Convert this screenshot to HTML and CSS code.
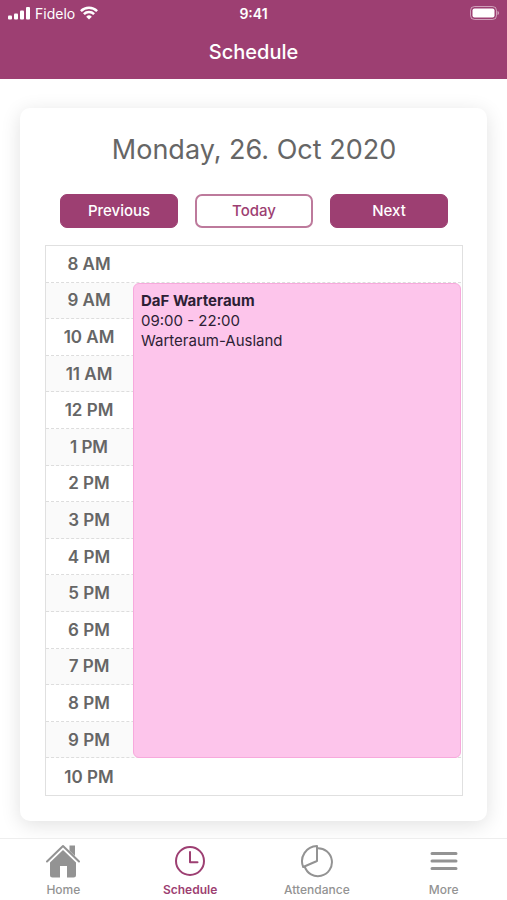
FILE: index.html
```html
<!DOCTYPE html>
<html lang="en">
<head>
<meta charset="utf-8">
<meta name="viewport" content="width=device-width, initial-scale=1">
<title>Schedule</title>
<link rel="stylesheet" href="styles.css">
</head>
<body>
<header class="header">
  <div class="status">
    <div class="carrier">
      <svg width="22" height="14" viewBox="0 0 22 14" fill="currentColor" aria-hidden="true">
        <rect x="0" y="9.500" width="4" height="4" rx="1"/><rect x="6" y="7.500" width="4" height="6" rx="1"/><rect x="12" y="4.500" width="4" height="9" rx="1"/><rect x="18" y="1" width="4" height="12.500" rx="1"/>
      </svg>
      <span>Fidelo</span>
      <svg width="18" height="14" viewBox="0 0 18 14" fill="none" stroke="currentColor" stroke-width="2.5" aria-hidden="true">
        <path d="M.9 5.1a11.6 11.6 0 0 1 16.2 0M3.9 8.2a7.3 7.3 0 0 1 10.2 0"/><path d="M6.2 10.7a4 4 0 0 1 5.6 0L9 13.6z" fill="currentColor" stroke="none"/>
      </svg>
    </div>
    <time class="clock">9:41</time>
    <svg class="battery" width="30" height="14" viewBox="0 0 30 14" aria-hidden="true">
      <rect x="1.500" y=".5" width="26" height="13" rx="4" fill="none" stroke="#fff" stroke-opacity=".5"/><rect x="3.500" y="2.500" width="22" height="9" rx="2" fill="#fff"/><path d="M28.500 5c2 .6 2 3.400 0 4z" fill="#fff" fill-opacity=".5"/>
    </svg>
  </div>
  <h1 class="title">Schedule</h1>
</header>
<main class="main">
  <section class="card">
    <h2 class="date">Monday, 26. Oct 2020</h2>
    <div class="actions">
      <button class="button" type="button">Previous</button>
      <button class="button outline" type="button">Today</button>
      <button class="button" type="button">Next</button>
    </div>
    <div class="calendar">
      <ol class="hours">
        <li><span>8 AM</span></li>
        <li><span>9 AM</span></li>
        <li><span>10 AM</span></li>
        <li><span>11 AM</span></li>
        <li><span>12 PM</span></li>
        <li><span>1 PM</span></li>
        <li><span>2 PM</span></li>
        <li><span>3 PM</span></li>
        <li><span>4 PM</span></li>
        <li><span>5 PM</span></li>
        <li><span>6 PM</span></li>
        <li><span>7 PM</span></li>
        <li><span>8 PM</span></li>
        <li><span>9 PM</span></li>
        <li><span>10 PM</span></li>
      </ol>
      <article class="event">
        <h3>DaF Warteraum</h3>
        <p>09:00 - 22:00</p>
        <p>Warteraum-Ausland</p>
      </article>
    </div>
  </section>
</main>
<nav class="tabs">
  <a href="#home">
    <svg width="36" height="34" viewBox="0 0 36 34" fill="currentColor" aria-hidden="true">
      <path d="M2 17.500 18 2l16 15.500" fill="none" stroke="currentColor" stroke-width="2" stroke-linecap="round" stroke-linejoin="round"/><path d="M24.500 1.500H30v10.500L24.500 6.700z"/><path d="M18 6 31 18.600V31a2.500 2.500 0 0 1-2.500 2.500H22V22h-7v11.500H7.500A2.500 2.500 0 0 1 5 31V18.600z"/>
    </svg>
    <span>Home</span>
  </a>
  <a class="active" href="#schedule" aria-current="page">
    <svg width="36" height="34" viewBox="0 0 36 34" fill="none" stroke="currentColor" stroke-width="2" aria-hidden="true">
      <circle cx="18" cy="17" r="14"/><path d="M18 8v10.200h7.500" stroke-linecap="round" stroke-linejoin="round"/>
    </svg>
    <span>Schedule</span>
  </a>
  <a href="#attendance">
    <svg width="36" height="34" viewBox="0 0 36 34" fill="none" stroke="currentColor" stroke-width="2" stroke-linejoin="round" aria-hidden="true">
      <path d="M18 2A15.200 15.200 0 0 0 4.200 23L18 17zM18 4.200a14 14 0 1 1-12.400 18.200"/>
    </svg>
    <span>Attendance</span>
  </a>
  <a href="#more">
    <svg width="36" height="34" viewBox="0 0 36 34" fill="none" stroke="currentColor" stroke-width="3" stroke-linecap="round" aria-hidden="true">
      <path d="M6 9.500h24M6 17h24M6 24.500h24"/>
    </svg>
    <span>More</span>
  </a>
</nav>
</body>
</html>
```
FILE: styles.css
```css
:root {
  --brand: #9d3f72;
}

* {
  box-sizing: border-box;
  margin: 0;
  padding: 0;
}

body {
  display: flex;
  flex-direction: column;
  min-height: 100vh;
  background: #fff;
  color: #666;
  font-family: Inter, "Liberation Sans", sans-serif;
  font-size: 16px;
}

.header {
  padding: 3px 8px 13px;
  background: var(--brand);
  color: #fff;
}

.status {
  display: grid;
  grid-template-columns: 1fr auto 1fr;
  align-items: center;
  height: 20px;
  font-size: 14px;
}

.carrier {
  display: flex;
  align-items: center;
  gap: 5px;
}

.clock {
  font-weight: 600;
}

.battery {
  justify-self: end;
}

.title {
  margin-top: 15px;
  font-size: 20px;
  font-weight: 500;
  line-height: 28px;
  text-align: center;
}

.main {
  display: flex;
  flex: 1;
  padding: 29px 20px 17px;
}

.card {
  display: flex;
  flex: 1;
  flex-direction: column;
  padding: 24px 24px 25px 25px;
  border-radius: 10px;
  box-shadow: 0 4px 20px rgba(0, 0, 0, 0.12);
}

.date {
  font-size: 27px;
  font-weight: 400;
  line-height: 36px;
  text-align: center;
}

.actions {
  display: grid;
  grid-template-columns: repeat(3, 1fr);
  gap: 17px;
  margin: 26px 15px 17px;
}

.button {
  height: 34px;
  border: 1px solid var(--brand);
  border-radius: 7px;
  background: var(--brand);
  color: #fff;
  font: 500 15px/20px Inter, "Liberation Sans", sans-serif;
}

.outline {
  border: 2px solid #bd7a9c;
  background: #fff;
  color: var(--brand);
}

.calendar {
  display: grid;
  flex: 1;
  grid-template-columns: 87px 1fr;
  grid-template-rows: repeat(15, minmax(32px, 1fr));
  padding-right: 1px;
  border: 1px solid #e0e0e0;
}

.hours {
  display: grid;
  grid-area: 1 / 1 / -1 / -1;
  grid-template-rows: subgrid;
  list-style: none;
}

.hours li {
  display: flex;
  align-items: center;
  border-bottom: 1px dashed #ddd;
  font-size: 17px;
  font-weight: 600;
  line-height: 20px;
}

.hours li:nth-child(even) {
  background: #fafafa;
}

.hours li:last-child {
  border-bottom: 0;
}

.hours span {
  width: 86px;
  text-align: center;
}

.event {
  z-index: 1;
  grid-area: 2 / 2 / 15 / 3;
  padding: 7px;
  border: 1px solid #f7a9dc;
  border-radius: 6px;
  background: #fdc5eb;
  color: #2d1f35;
  font-size: 15px;
  line-height: 20px;
}

.event h3 {
  font-size: 15px;
  font-weight: 700;
}

.tabs {
  display: grid;
  grid-template-columns: repeat(4, 1fr);
  height: 62px;
  padding: 5px 0 4px;
  border-top: 1px solid #eee;
  background: #fff;
}

.tabs a {
  display: flex;
  flex-direction: column;
  align-items: center;
  gap: 4px;
  color: #939393;
  font-size: 12px;
  font-weight: 500;
  line-height: 16px;
  text-decoration: none;
}

.tabs .active {
  color: var(--brand);
  font-weight: 600;
}
```
